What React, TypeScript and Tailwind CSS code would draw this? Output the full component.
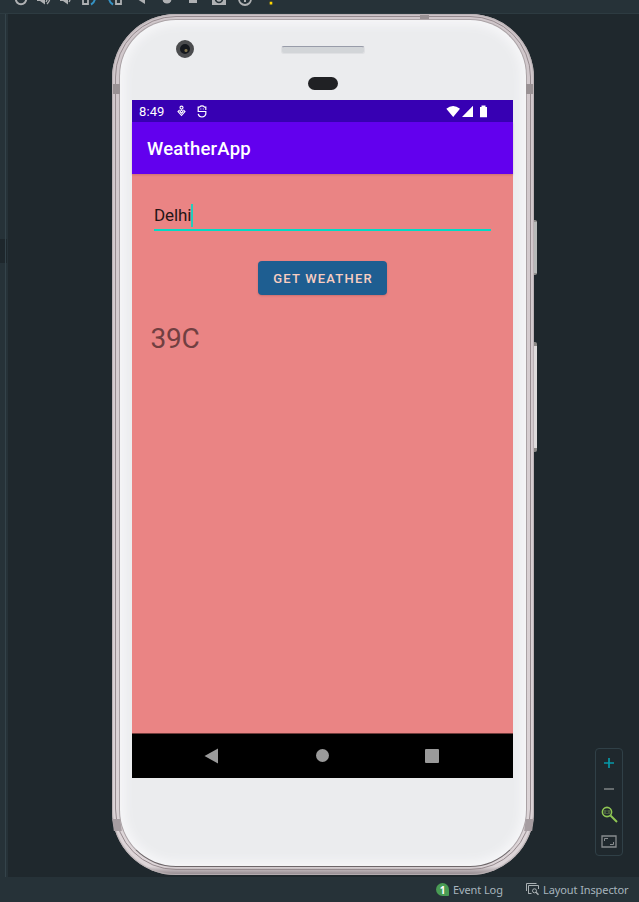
import type { ReactNode } from "react";

const toolIcons: { box: string; width: number; art: ReactNode }[] = [
  { box: "10 0 22 13", width: 22, art: <circle cx="21" cy="-1" r="5.2" fill="none" stroke="#afb1b3" strokeWidth="2" /> },
  { box: "32 0 22 13", width: 22, art: <g><path d="M37-3h3l5-4V4.5l-5-3.5h-3z" fill="#afb1b3" /><path d="M46 2q2-3 0-5M47 4q5-5 1-10" fill="none" stroke="#afb1b3" strokeWidth="1.3" /></g> },
  { box: "54 0 22 13", width: 22, art: <g><path d="M60-3h3l5-4V4.5L63 1h-3z" fill="#afb1b3" /><path d="M69 2q2-3 0-5" fill="none" stroke="#afb1b3" strokeWidth="1.3" /></g> },
  { box: "76 0 26 13", width: 26, art: <g fill="none"><path d="M83-8h5V4h-5z" stroke="#afb1b3" strokeWidth="1.8" /><path d="M91 4.5q4-2 4-7" stroke="#3592c4" strokeWidth="2" /></g> },
  { box: "102 0 26 13", width: 26, art: <g fill="none"><path d="M116-8h5V4h-5z" stroke="#afb1b3" strokeWidth="1.8" /><path d="M113 4.5q-4-2-4-7" stroke="#3592c4" strokeWidth="2" /></g> },
  { box: "128 0 26 13", width: 26, art: <path d="M137-1 145-6V4z" fill="#afb1b3" /> },
  { box: "154 0 26 13", width: 26, art: <circle cx="167" cy="-1" r="4.5" fill="#afb1b3" /> },
  { box: "180 0 26 13", width: 26, art: <path d="M189-5h8v8h-8z" fill="#afb1b3" /> },
  { box: "206 0 26 13", width: 26, art: <g><path d="M212-7h14V5h-14z" fill="#afb1b3" /><circle cx="219" cy="-1" r="3.5" fill="none" stroke="#263238" strokeWidth="1.6" /></g> },
  { box: "232 0 26 13", width: 26, art: <g><circle cx="245" cy="-1" r="6" fill="none" stroke="#afb1b3" strokeWidth="1.8" /><path d="M244-3h2v5h-2z" fill="#afb1b3" /></g> },
  { box: "258 0 26 13", width: 26, art: <path d="M269.7-2h2.6v2h-2.6zM269.7 1.8h2.6v2.6h-2.6z" fill="#ffd600" /> },
];

function Toolbar() {
  return (
    <header className="flex h-[14px] shrink-0 border-b border-[#2d3b41] bg-[#263238] pl-[10px]">
      {toolIcons.map((icon) => (
        <svg key={icon.box} width={icon.width} height="13" viewBox={icon.box}>{icon.art}</svg>
      ))}
    </header>
  );
}

function StatusBar() {
  return (
    <div className="flex h-[22px] items-center bg-[#3700b3] pl-[7px] text-white">
      <span className="w-[37.5px] pt-px font-[Roboto,sans-serif] text-[13px] leading-[22px] tracking-[0.1px]">8:49</span>
      <svg width="9" height="12" viewBox="0 0 9 12" fill="none" stroke="white" strokeWidth="1.1">
        <circle cx="4.5" cy="2.6" r="1.5" />
        <path d="M4.5 5 6 6.7 4.5 8.3 3 6.7zM2.7 4.8 1 6.5l3.5 4L8 6.5 6.3 4.8" />
      </svg>
      <svg className="ml-[11px]" width="10" height="13" viewBox="0 0 10 13" fill="none" stroke="white" strokeWidth="1.2">
        <path d="M8.8 5V2.2H7.6Q5-.4 2.4 2.2H1.2v4.3h7.6v2.7Q8.2 11.8 5 12 1.8 11.8 1.2 8.8M3.4 4h.9M5.8 4h.9" />
      </svg>
      <svg className="ml-auto mr-[25px]" width="42" height="13" viewBox="0 0 42 13" fill="white">
        <path d="M.3 3.8Q7-2 14 3.8L7.2 12zM16 12 27 .8V12zM34 2h1.5V.5h4V2H41v10.2h-7z" />
      </svg>
    </div>
  );
}

function Screen() {
  return (
    <div className="flex h-[678px] w-[381px] flex-col bg-[#ea8484] font-[Roboto,sans-serif]">
      <StatusBar />
      <div className="z-10 flex h-[52px] items-center bg-[#6200ee] pl-[15px] pt-[3px] text-[18.5px] font-medium tracking-[0.22px] text-white shadow-[0_1px_2px_rgba(80,30,30,0.2)]">
        WeatherApp
      </div>
      <div className="flex grow flex-col">
        <div className="ml-[22px] mt-[29px] flex h-[28px] w-[337px] border-b-2 border-[#03dac5] text-[17px] leading-[25px] tracking-[-0.1px] text-[#241516]">
          <span>Delhi</span>
          <i className="mt-px h-[23px] w-[2px] bg-[#24cdbb]" />
        </div>
        <button className="ml-[126px] mt-[30px] h-[34px] w-[129px] rounded-[4px] bg-[#1e5e91] pl-px pt-[2px] text-[13px] font-medium tracking-[1.2px] text-[#f8cec1] shadow-[0_1px_2px_rgba(80,30,30,0.2)]">
          GET WEATHER
        </button>
        <div className="ml-[18.5px] mt-[26px] text-[28px] leading-[36px] tracking-[-0.2px] text-[#713f41]">39C</div>
      </div>
      <nav className="flex h-[45px] items-center border-t border-[#713c3c] bg-black">
        <svg className="ml-[72px]" width="15" height="16" viewBox="0 0 15 16"><path d="M.5 8 14 .5v15z" fill="#9a9a9a" /></svg>
        <i className="-mt-px ml-[97px] size-[13px] rounded-full bg-[#9a9a9a]" />
        <i className="ml-[96px] size-[14px] rounded-[1px] bg-[#9a9a9a]" />
      </nav>
    </div>
  );
}

function Phone() {
  return (
    <div className="relative ml-[104px] h-[861px] w-[422px] rounded-[64px] bg-linear-to-b from-[#d0c7cb] via-[#ddd5d8] via-99% to-[#8d8388] p-[3px] pt-[2px] shadow-[inset_0_0_1px_1px_#b8b0b3]">
      <i className="absolute left-[422px] top-[206px] h-[55px] w-[3px] rounded-r-[2px] border-y-2 border-[#92908f] bg-[#b7bab9]" />
      <i className="absolute left-[422px] top-[328px] h-[110px] w-[3px] rounded-r-[2px] border-y-4 border-[#8b8987] bg-[#dedbdc]" />
      <i className="absolute left-[308px] top-px h-[4px] w-[9px] bg-[#999194]" />
      <i className="absolute left-px top-[70px] h-[10px] w-[7px] bg-[#999194]" />
      <i className="absolute right-px top-[70px] h-[10px] w-[7px] bg-[#999194]" />
      <i className="absolute left-px top-[805px] h-[12px] w-[8px] skew-x-[8deg] bg-[#a69da1]" />
      <i className="absolute right-px top-[805px] h-[12px] w-[8px] skew-x-[-8deg] bg-[#a69da1]" />
      <div className="h-[854px] rounded-[61px] border border-[#968b8f] p-[3px] pt-[2px]">
        <div className="flex h-[848px] flex-col rounded-[57px] border border-[#aaa2a5] border-b-[#6d6669] bg-[#ebecee] pl-[12px] shadow-[inset_0_0_10px_5px_#f6f6f8]">
          <div className="flex h-[80px] shrink-0">
            <i className="ml-[44px] mt-[20px] size-[18px] rounded-full border-[4px] border-[#4b4c4e] bg-[radial-gradient(circle_at_60%_65%,#81734b_0_1px,#15181d_2px)]" />
            <div className="ml-[87px] mt-[26px] flex w-[84px] flex-col items-center">
              <i className="h-[8px] w-[84px] rounded-[3px] border border-[#dfe0e3] border-t-[#989ca9] bg-[#d2d5d8]" />
              <i className="mt-[23px] h-[13px] w-[30px] rounded-full bg-[#202124]" />
            </div>
          </div>
          <Screen />
        </div>
      </div>
    </div>
  );
}

function ZoomControls() {
  return (
    <div className="ml-auto mr-[16px] mt-[734px] flex h-[108px] w-[28px] flex-col items-center rounded-[4px] border border-[#304047] pt-[9px]">
      <svg width="10" height="10" viewBox="0 0 10 10"><path d="M5 0v10M0 5h10" stroke="#0798a8" strokeWidth="1.7" /></svg>
      <i className="mt-[20px] h-[2px] w-[10px] bg-[#666c6e]" />
      <svg className="mt-[16px]" width="17" height="17" viewBox="0 0 17 17" fill="none">
        <circle cx="6" cy="6" r="4.6" stroke="#8fc653" strokeWidth="1.6" /><path d="m9.5 9.5 6.5 6.5" stroke="#8fc653" strokeWidth="2" /><path d="M4 4v4M8 4v4M6 4.5v1M6 7v1" stroke="#728f50" />
      </svg>
      <svg className="mt-[12px]" width="16" height="13" viewBox="0 0 16 13" fill="none" stroke="#888c8e">
        <path d="M1 1h14v11H1z" strokeWidth="1.3" /><path d="M3.5 6V3.5H7M9 9.5h3.5V7" />
      </svg>
    </div>
  );
}

function Footer() {
  return (
    <footer className="flex h-[25px] shrink-0 items-center bg-[#263238] pl-[436px] pt-px font-['Noto_Sans','Open_Sans',sans-serif] text-[11px] text-[#a7b5bd]">
      <span className="-mt-px grid size-[13px] place-items-center rounded-[7px] rounded-br-[1px] bg-[#499c54] text-[10px] font-bold leading-none text-white">1</span>
      <span className="ml-[4px] w-[50px] whitespace-nowrap pt-px tracking-[-0.1px]">Event Log</span>
      <svg className="-mt-px ml-[23px]" width="13" height="13" viewBox="0 0 13 13" fill="none" stroke="#a9b0b3">
        <path d="M.5 8V.5h10M3 10.5h-.5v-8h10V6M2.5 10.5h3" /><circle cx="8.5" cy="7.8" r="2" /><path d="m10 9.3 2.5 2.5" strokeWidth="1.4" />
      </svg>
      <span className="ml-[4px] whitespace-nowrap pt-px tracking-[-0.1px]">Layout Inspector</span>
    </footer>
  );
}

export default function App() {
  return (
    <div className="flex h-[902px] w-[639px] flex-col overflow-hidden bg-[#1f282d]">
      <Toolbar />
      <main className="flex h-[863px]">
        <aside className="h-full w-[8px] shrink-0 bg-[#263238] pt-[225px]">
          <i className="block h-[24px] w-[7px] bg-[#1e272c]" />
          <i className="relative -top-[249px] left-[5px] block h-[863px] w-px bg-[#34434a]" />
        </aside>
        <Phone />
        <ZoomControls />
      </main>
      <Footer />
    </div>
  );
}
